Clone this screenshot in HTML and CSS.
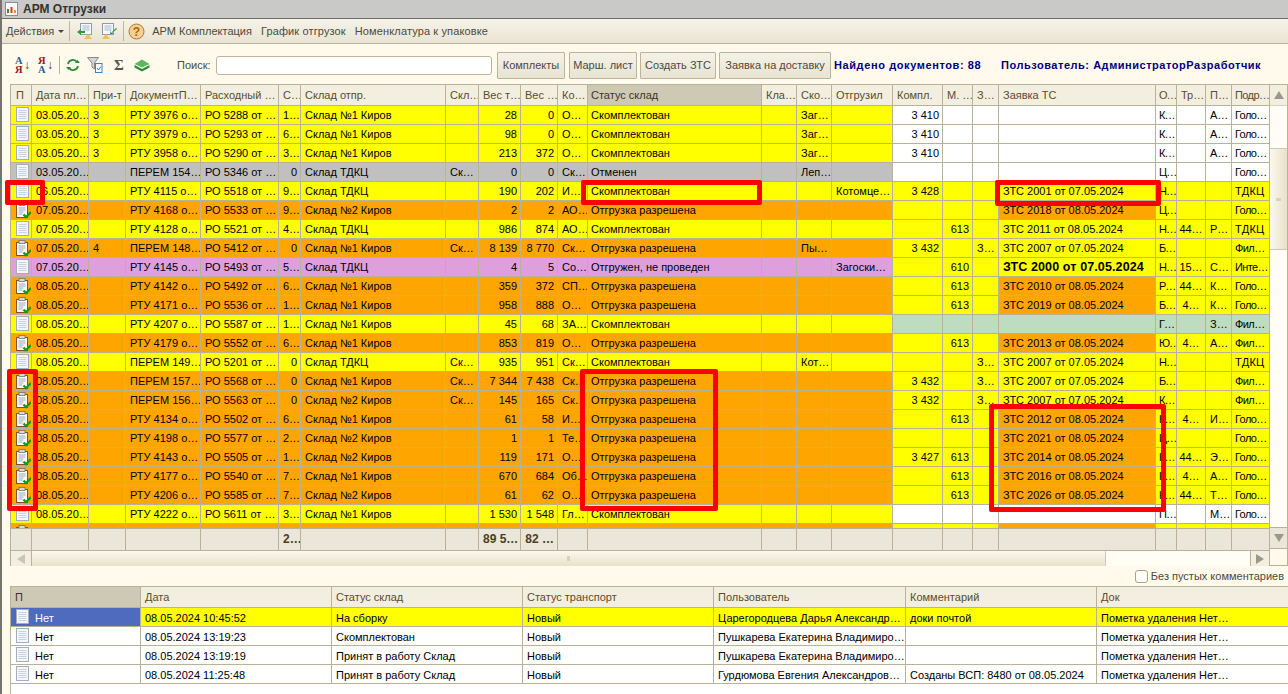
FILE: index.html
```html
<!DOCTYPE html>
<html lang="ru">
<head>
<meta charset="utf-8">
<title>АРМ Отгрузки</title>
<link rel="stylesheet" href="styles.css">
</head>
<body>
<svg class="defs" xmlns="http://www.w3.org/2000/svg">
  <symbol id="doc" viewBox="0 0 13 15"><rect x=".5" y=".5" width="12" height="14" fill="#f3f6fb" stroke="#a4aebb"/><path d="M2.500 3.500h8M2.500 5.500h8M2.500 7.500h8M2.500 9.500h8M2.500 11.500h8" stroke="#c6d1e2"/></symbol>
  <symbol id="clip" viewBox="0 0 16 17"><rect x=".5" y="2.500" width="11" height="13" fill="#fff" stroke="#8a4f1d"/><rect x="3" y=".5" width="6" height="3" fill="#d8d8d8" stroke="#77736a" stroke-width=".8"/><path d="M2.500 6h7M2.500 8h7M2.500 10h5M2.500 12h4" stroke="#9aa3b3"/><path d="M7.500 12.500l2.500 2.500 5-5" fill="none" stroke="#0f9f1f" stroke-width="2.400"/></symbol>
</svg>
<div class="win">
  <header class="title">
    <svg class="tico" width="14" height="16" viewBox="0 0 14 16"><rect x=".5" y="1.500" width="12" height="13" fill="#fbfbfb" stroke="#8d8d98"/><path d="M3 12V8" stroke="#2a9a2a" stroke-width="2"/><path d="M6.500 12V6" stroke="#d83a2a" stroke-width="2"/><path d="M10 12V9" stroke="#d9a21a" stroke-width="2"/></svg>
    <span>АРМ Отгрузки</span>
  </header>
  <nav class="menu">
    <span class="act">Действия</span><span class="caret"></span><span class="sep sp1"></span>
    <svg class="mi" width="18" height="18" viewBox="0 0 18 18"><rect x="4.500" y="1.500" width="11" height="11" fill="#f5f8fc" stroke="#8e9cb0"/><path d="M6.500 4h7M6.500 6h7M6.500 8h7" stroke="#aab8cf"/><path d="M1 10l4-3v2h4v2H5v2z" fill="#2f9a35"/><path d="M8 17l4-5 4 5z" fill="#eec25a"/></svg>
    <svg class="mi mi2" width="18" height="18" viewBox="0 0 18 18"><rect x="2.500" y="1.500" width="11" height="11" fill="#f5f8fc" stroke="#8e9cb0"/><path d="M4.500 4h7M4.500 6h7M4.500 8h7" stroke="#aab8cf"/><path d="M16 6l-5 5v-3l-1 4h4l-2-1 5-4z" fill="#2f9a35"/><path d="M2 17l4-5 4 5z" fill="#eec25a"/></svg>
    <span class="sep sp2"></span>
    <svg class="help" width="17" height="17" viewBox="0 0 17 17"><circle cx="8.500" cy="8.500" r="7.500" fill="#f8cf8c" stroke="#a9793a"/><text x="8.500" y="12.500" text-anchor="middle" class="qm">?</text></svg>
    <span class="ml1">АРМ Комплектация</span><span class="ml2">График отгрузок</span><span class="ml3">Номенклатура к упаковке</span>
  </nav>
  <div class="tools">
    <span class="sort"><span class="az"><em class="bl">А</em><em class="rd">Я</em></span><span class="arr">↓</span></span>
    <span class="sort s2"><span class="az"><em class="rd">Я</em><em class="bl">А</em></span><span class="arr">↓</span></span>
    <span class="sep sp3"></span>
    <svg class="ti t1" width="16" height="16" viewBox="0 0 16 16"><path d="M3 7a5 5 0 0 1 9-2M13 9a5 5 0 0 1-9 2" fill="none" stroke="#2d8a3a" stroke-width="1.800"/><path d="M10 6h5l-2.500-3zM6 10H1l2.500 3z" fill="#2d8a3a"/></svg>
    <svg class="ti t2" width="16" height="17" viewBox="0 0 16 17"><path d="M.5 .5h11L7.500 6v6L5 10V6z" fill="#d4d4d4" stroke="#8b8b8b"/><rect x="8.500" y="6.500" width="6.500" height="9" fill="#fff" stroke="#3a82c4"/><path d="M10 11l1.500 2 2.500-3.500" fill="none" stroke="#3a82c4"/></svg>
    <span class="sum">Σ</span>
    <svg class="ti t3" width="16" height="13" viewBox="0 0 16 13"><path d="M8 .5L15.500 5 8 8.500 .5 5z" fill="#5cb85c"/><path d="M.5 6L8 10l7.500-4v2.500L8 12.500 .5 8.500z" fill="#2d8a3a"/></svg>
    <label class="slabel" for="q">Поиск:</label>
    <input id="q" class="search" type="text">
    <button class="btn b1">Комплекты</button>
    <button class="btn b2">Марш. лист</button>
    <button class="btn b3">Создать ЗТС</button>
    <button class="btn b4">Заявка на доставку</button>
    <strong class="found">Найдено документов: 88</strong>
    <strong class="user">Пользователь: АдминистраторРазработчик</strong>
  </div>

  <section class="grid">
    <div class="gcol">
      <div class="row head">
        <span>П</span><span>Дата пл…</span><span>При-т</span><span>ДокументП…</span><span>Расходный …</span><span>С…</span><span>Склад отпр.</span><span>Скл…</span><span>Вес т…</span><span>Вес …</span><span>Ко…</span><span class="cur">Статус склад</span><span>Кла…</span><span>Ско…</span><span>Отгрузил</span><span>Компл.</span><span>М. …</span><span>З…</span><span>Заявка ТС</span><span>О…</span><span>Тр…</span><span>П…</span><span>Подр…</span>
      </div>
      <div class="rows">
        <div class="row y rw"><span><svg class="ic"><use href="#doc"/></svg></span><span>03.05.20…</span><span>3</span><span>РТУ 3976 о…</span><span>РО 5288 от …</span><span>1…</span><span>Склад №1 Киров</span><i></i><span>28</span><span>0</span><span>О…</span><span>Скомплектован</span><i></i><span>Заг…</span><i></i><span>3 410</span><i></i><i></i><i></i><span>К…</span><i></i><span>А…</span><span>Голо…</span></div>
        <div class="row y rw"><span><svg class="ic"><use href="#doc"/></svg></span><span>03.05.20…</span><span>3</span><span>РТУ 3979 о…</span><span>РО 5293 от …</span><span>6…</span><span>Склад №1 Киров</span><i></i><span>98</span><span>0</span><span>О…</span><span>Скомплектован</span><i></i><span>Заг…</span><i></i><span>3 410</span><i></i><i></i><i></i><span>К…</span><i></i><span>А…</span><span>Голо…</span></div>
        <div class="row y rw"><span><svg class="ic"><use href="#doc"/></svg></span><span>03.05.20…</span><span>3</span><span>РТУ 3958 о…</span><span>РО 5290 от …</span><span>3…</span><span>Склад №1 Киров</span><i></i><span>213</span><span>372</span><span>О…</span><span>Скомплектован</span><i></i><span>Заг…</span><i></i><span>3 410</span><i></i><i></i><i></i><span>К…</span><i></i><span>А…</span><span>Голо…</span></div>
        <div class="row g rw"><span><svg class="ic"><use href="#doc"/></svg></span><span>03.05.20…</span><i></i><span>ПЕРЕМ 154…</span><span>РО 5346 от …</span><span>0</span><span>Склад ТДКЦ</span><span>Ск…</span><span>0</span><span>0</span><span>Ск…</span><span>Отменен</span><i></i><span>Леп…</span><i></i><i></i><i></i><i></i><i></i><span>Ц…</span><i></i><i></i><span>Голо…</span></div>
        <div class="row y ry"><span><svg class="ic"><use href="#doc"/></svg></span><span>06.05.20…</span><i></i><span>РТУ 4115 о…</span><span>РО 5518 от …</span><span>9…</span><span>Склад ТДКЦ</span><i></i><span>190</span><span>202</span><span>И…</span><span>Скомплектован</span><i></i><i></i><span>Котомце…</span><span>3 428</span><i></i><i></i><span>ЗТС 2001 от 07.05.2024</span><span>Н…</span><i></i><i></i><span class="wd">ТДКЦ</span></div>
        <div class="row o ry"><span><svg class="icc"><use href="#clip"/></svg></span><span>07.05.20…</span><i></i><span>РТУ 4168 о…</span><span>РО 5533 от …</span><span>9…</span><span>Склад №2 Киров</span><i></i><span>2</span><span>2</span><span>АО…</span><span>Отгрузка разрешена</span><i></i><i></i><i></i><i></i><i></i><i></i><span class="zo">ЗТС 2018 от 08.05.2024</span><span>Ц…</span><i></i><i></i><span>Голо…</span></div>
        <div class="row y ry"><span><svg class="ic"><use href="#doc"/></svg></span><span>07.05.20…</span><i></i><span>РТУ 4128 о…</span><span>РО 5521 от …</span><span>4…</span><span>Склад ТДКЦ</span><i></i><span>986</span><span>874</span><span>АО…</span><span>Скомплектован</span><i></i><i></i><i></i><i></i><span>613</span><i></i><span>ЗТС 2011 от 08.05.2024</span><span>Н…</span><span>44…</span><span>Р…</span><span class="wd">ТДКЦ</span></div>
        <div class="row o ry"><span><svg class="icc"><use href="#clip"/></svg></span><span>07.05.20…</span><span>4</span><span>ПЕРЕМ 148…</span><span>РО 5412 от …</span><span>0</span><span>Склад №1 Киров</span><span>Ск…</span><span>8 139</span><span>8 770</span><span>Ск…</span><span>Отгрузка разрешена</span><i></i><span>Пы…</span><i></i><span>3 432</span><i></i><span>З…</span><span>ЗТС 2007 от 07.05.2024</span><span>Б…</span><i></i><i></i><span>Фил…</span></div>
        <div class="row p ry"><span><svg class="ic"><use href="#doc"/></svg></span><span>07.05.20…</span><i></i><span>РТУ 4145 о…</span><span>РО 5493 от …</span><span>5…</span><span>Склад ТДКЦ</span><i></i><span>4</span><span>5</span><span>Со…</span><span>Отгружен, не проведен</span><i></i><i></i><span>Загоски…</span><i></i><span>610</span><i></i><span class="zb">ЗТС 2000 от 07.05.2024</span><span>Н…</span><span>15…</span><span>С…</span><span>Инте…</span></div>
        <div class="row o ry"><span><svg class="icc"><use href="#clip"/></svg></span><span>08.05.20…</span><i></i><span>РТУ 4142 о…</span><span>РО 5492 от …</span><span>6…</span><span>Склад №1 Киров</span><i></i><span>359</span><span>372</span><span>СП…</span><span>Отгрузка разрешена</span><i></i><i></i><i></i><i></i><span>613</span><i></i><span class="zo">ЗТС 2010 от 08.05.2024</span><span>Р…</span><span>44…</span><span>К…</span><span>Голо…</span></div>
        <div class="row o ry"><span><svg class="icc"><use href="#clip"/></svg></span><span>08.05.20…</span><i></i><span>РТУ 4171 о…</span><span>РО 5536 от …</span><span>1…</span><span>Склад №1 Киров</span><i></i><span>958</span><span>888</span><span>О…</span><span>Отгрузка разрешена</span><i></i><i></i><i></i><i></i><span>613</span><i></i><span class="zo">ЗТС 2019 от 08.05.2024</span><span>Б…</span><span>4…</span><span>К…</span><span>Голо…</span></div>
        <div class="row y rg"><span><svg class="ic"><use href="#doc"/></svg></span><span>08.05.20…</span><i></i><span>РТУ 4207 о…</span><span>РО 5587 от …</span><span>1…</span><span>Склад №1 Киров</span><i></i><span>45</span><span>68</span><span>ЗА…</span><span>Скомплектован</span><i></i><i></i><i></i><i></i><i></i><i></i><i></i><span>Г…</span><i></i><span>З…</span><span>Фил…</span></div>
        <div class="row o ry"><span><svg class="icc"><use href="#clip"/></svg></span><span>08.05.20…</span><i></i><span>РТУ 4179 о…</span><span>РО 5552 от …</span><span>6…</span><span>Склад №1 Киров</span><i></i><span>853</span><span>819</span><span>О…</span><span>Отгрузка разрешена</span><i></i><i></i><i></i><i></i><span>613</span><i></i><span class="zo">ЗТС 2013 от 08.05.2024</span><span>Ю…</span><span>4…</span><span>А…</span><span>Фил…</span></div>
        <div class="row y ry"><span><svg class="ic"><use href="#doc"/></svg></span><span>08.05.20…</span><i></i><span>ПЕРЕМ 149…</span><span>РО 5201 от …</span><span>0</span><span>Склад ТДКЦ</span><span>Ск…</span><span>935</span><span>951</span><span>Ск…</span><span>Скомплектован</span><i></i><span>Кот…</span><i></i><i></i><i></i><span>З…</span><span>ЗТС 2007 от 07.05.2024</span><span>Н…</span><i></i><i></i><span class="wd">ТДКЦ</span></div>
        <div class="row o ry"><span><svg class="icc"><use href="#clip"/></svg></span><span>08.05.20…</span><i></i><span>ПЕРЕМ 157…</span><span>РО 5568 от …</span><span>0</span><span>Склад №1 Киров</span><span>Ск…</span><span>7 344</span><span>7 438</span><span>Ск…</span><span>Отгрузка разрешена</span><i></i><i></i><i></i><span>3 432</span><i></i><span>З…</span><span>ЗТС 2007 от 07.05.2024</span><span>Б…</span><i></i><i></i><span>Фил…</span></div>
        <div class="row o ry"><span><svg class="icc"><use href="#clip"/></svg></span><span>08.05.20…</span><i></i><span>ПЕРЕМ 156…</span><span>РО 5563 от …</span><span>0</span><span>Склад №2 Киров</span><span>Ск…</span><span>145</span><span>165</span><span>Ск…</span><span>Отгрузка разрешена</span><i></i><i></i><i></i><span>3 432</span><i></i><span>З…</span><span>ЗТС 2007 от 07.05.2024</span><span>К…</span><i></i><i></i><span>Фил…</span></div>
        <div class="row o ry"><span><svg class="icc"><use href="#clip"/></svg></span><span>08.05.20…</span><i></i><span>РТУ 4134 о…</span><span>РО 5502 от …</span><span>6…</span><span>Склад №1 Киров</span><i></i><span>61</span><span>58</span><span>И…</span><span>Отгрузка разрешена</span><i></i><i></i><i></i><i></i><span>613</span><i></i><span class="zo">ЗТС 2012 от 08.05.2024</span><span>К…</span><span>4…</span><span>И…</span><span>Голо…</span></div>
        <div class="row o ry"><span><svg class="icc"><use href="#clip"/></svg></span><span>08.05.20…</span><i></i><span>РТУ 4198 о…</span><span>РО 5577 от …</span><span>2…</span><span>Склад №2 Киров</span><i></i><span>1</span><span>1</span><span>Те…</span><span>Отгрузка разрешена</span><i></i><i></i><i></i><i></i><i></i><i></i><span class="zo">ЗТС 2021 от 08.05.2024</span><span>Ц…</span><i></i><i></i><span>Голо…</span></div>
        <div class="row o ry"><span><svg class="icc"><use href="#clip"/></svg></span><span>08.05.20…</span><i></i><span>РТУ 4143 о…</span><span>РО 5505 от …</span><span>1…</span><span>Склад №2 Киров</span><i></i><span>119</span><span>171</span><span>О…</span><span>Отгрузка разрешена</span><i></i><i></i><i></i><span>3 427</span><span>613</span><i></i><span class="zo">ЗТС 2014 от 08.05.2024</span><span>К…</span><span>44…</span><span>Э…</span><span>Голо…</span></div>
        <div class="row o ry"><span><svg class="icc"><use href="#clip"/></svg></span><span>08.05.20…</span><i></i><span>РТУ 4177 о…</span><span>РО 5540 от …</span><span>7…</span><span>Склад №1 Киров</span><i></i><span>670</span><span>684</span><span>Об…</span><span>Отгрузка разрешена</span><i></i><i></i><i></i><i></i><span>613</span><i></i><span class="zo">ЗТС 2016 от 08.05.2024</span><span>К…</span><span>4…</span><span>А…</span><span>Голо…</span></div>
        <div class="row o ry"><span><svg class="icc"><use href="#clip"/></svg></span><span>08.05.20…</span><i></i><span>РТУ 4206 о…</span><span>РО 5585 от …</span><span>7…</span><span>Склад №2 Киров</span><i></i><span>61</span><span>62</span><span>О…</span><span>Отгрузка разрешена</span><i></i><i></i><i></i><i></i><span>613</span><i></i><span class="zo">ЗТС 2026 от 08.05.2024</span><span>К…</span><span>44…</span><span>Т…</span><span>Голо…</span></div>
        <div class="row y rw"><span><svg class="ic"><use href="#doc"/></svg></span><span>08.05.20…</span><i></i><span>РТУ 4222 о…</span><span>РО 5611 от …</span><span>3…</span><span>Склад №1 Киров</span><i></i><span>1 530</span><span>1 548</span><span>Гл…</span><span>Скомплектован</span><i></i><i></i><i></i><i></i><i></i><i></i><i></i><span>П…</span><i></i><span>М…</span><span>Голо…</span></div>
        <div class="row o ry"><span><svg class="icc"><use href="#clip"/></svg></span><i></i><i></i><i></i><i></i><i></i><i></i><i></i><i></i><i></i><i></i><i></i><i></i><i></i><i></i><i></i><i></i><i></i><span class="zo"></span><i></i><i></i><i></i><i></i></div>
      </div>
      <div class="row foot">
        <i></i><i></i><i></i><i></i><i></i><span>2…</span><i></i><i></i><span>89 5…</span><span>82 …</span><i></i><i></i><i></i><i></i><i></i><i></i><i></i><i></i><i></i><i></i><i></i><i></i><i></i>
      </div>
      <div class="hs">
        <span class="hbtn"><span class="tri tl"></span></span>
        <span class="hthumb"><span class="vgrip"></span></span>
        <span class="htrack"></span>
        <span class="hbtn hr"><span class="tri tr"></span></span>
      </div>
    </div>
    <aside class="vs">
      <span class="vbtn"><span class="tri tu"></span></span>
      <span class="vtop"></span>
      <span class="vthumb"><span class="hgrip"></span></span>
      <span class="vtrack"></span>
      <span class="vbtn vd"><span class="tri td"></span></span>
      <span class="corner"></span>
    </aside>
  </section>

  <div class="chkrow"><span class="chk"></span><span>Без пустых комментариев</span></div>

  <section class="lower">
    <div class="lrow lhead"><span class="cur">П</span><span>Дата</span><span>Статус склад</span><span>Статус транспорт</span><span>Пользователь</span><span>Комментарий</span><span>Док</span></div>
    <div class="lrow sel"><span class="pic"><svg class="ic"><use href="#doc"/></svg>Нет</span><span>08.05.2024 10:45:52</span><span>На сборку</span><span>Новый</span><span>Царегородцева Дарья Александр…</span><span>доки почтой</span><span>Пометка удаления Нет…</span></div>
    <div class="lrow"><span class="pic"><svg class="ic"><use href="#doc"/></svg>Нет</span><span>08.05.2024 13:19:23</span><span>Скомплектован</span><span>Новый</span><span>Пушкарева Екатерина Владимиро…</span><i></i><span>Пометка удаления Нет…</span></div>
    <div class="lrow"><span class="pic"><svg class="ic"><use href="#doc"/></svg>Нет</span><span>08.05.2024 13:19:19</span><span>Принят в работу Склад</span><span>Новый</span><span>Пушкарева Екатерина Владимиро…</span><i></i><span>Пометка удаления Нет…</span></div>
    <div class="lrow"><span class="pic"><svg class="ic"><use href="#doc"/></svg>Нет</span><span>08.05.2024 11:25:48</span><span>Принят в работу Склад</span><span>Новый</span><span>Гурдюмова Евгения Александров…</span><span>Созданы ВСП: 8480 от 08.05.2024</span><span>Пометка удаления Нет…</span></div>
  </section>
</div>
<div class="mark m1"></div>
<div class="mark m2"></div>
<div class="mark m3"></div>
<div class="mark m4"></div>
<div class="mark m5"></div>
<div class="mark m6"></div>
</body>
</html>
```
FILE: styles.css
```css
* { box-sizing: border-box; }
html, body { margin: 0; padding: 0; }
body {
  width: 1288px; height: 694px; overflow: hidden; position: relative;
  font: 11px/18px "Liberation Sans", Arial, sans-serif; color: #000; background: #fffaeb;
}
.defs { display: none; }
.win { height: 694px; border-left: 2px solid #77746c; display: flex; flex-direction: column; }

.title {
  height: 19px; flex: none; display: flex; align-items: center; gap: 4px; padding-left: 3px;
  background: #c9c9c7; border-bottom: 1px solid #6d6d68; font-weight: bold; color: #333; font-size: 12px;
}
.menu {
  height: 25px; flex: none; display: flex; align-items: center; padding-left: 4px;
  background: linear-gradient(#f6f3e8, #e9e4d4); border-bottom: 1px solid #b9b296; color: #4d4a3c;
}
.caret { width: 0; height: 0; margin-left: 4px; border: 3px solid transparent; border-top: 3px solid #444; border-bottom: 0; }
.sep { width: 1px; height: 20px; background: #bdb69f; flex: none; }
.sp1 { margin-left: 5px; }
.mi { margin-left: 6px; }
.mi2 { margin-left: 6px; }
.sp2 { margin-left: 5px; }
.help { margin-left: 4px; }
.qm { font: bold 12px "Liberation Sans", sans-serif; fill: #a8641a; }
.ml1 { margin-left: 7px; }
.ml2 { margin-left: 9px; letter-spacing: .13px; }
.ml3 { margin-left: 9px; letter-spacing: .13px; }

.tools { height: 40px; flex: none; display: flex; align-items: center; padding: 2px 0 0 13px; color: #4d4a3c; }
.sort { display: flex; width: 16px; height: 18px; }
.s2 { margin-left: 7px; }
.az { display: flex; flex-direction: column; font: bold 10.5px/9px "Liberation Serif", serif; width: 9px; }
.az em { font-style: normal; }
.bl { color: #1f5e9e; }
.rd { color: #a3161c; }
.arr { font: bold 12px/18px "Liberation Sans", sans-serif; color: #333; }
.sp3 { margin-left: 5px; height: 18px; }
.t1 { margin-left: 5px; }
.t2 { margin-left: 6px; }
.sum { margin-left: 11px; width: 12px; font: bold 15px/18px "Liberation Serif", serif; color: #555; }
.t3 { margin-left: 8px; }
.slabel { margin-left: 27px; width: 39px; }
.search { width: 276px; height: 19px; border: 1px solid #bdb69f; border-radius: 3px; background: #fff; padding: 0; }
.btn {
  height: 27px; padding: 0; margin-left: 3px; border: 1px solid #bbb499; border-radius: 1px;
  background: linear-gradient(#f5f2e7, #e8e3d2); color: #4d4a3c; font: 11px "Liberation Sans", sans-serif;
}
.b1 { width: 68px; margin-left: 5px; }
.b2 { width: 68px; margin-left: 4px; }
.b3 { width: 76px; }
.b4 { width: 112px; }
.found, .user { color: #00007f; white-space: nowrap; }
.found { margin-left: 3px; width: 167px; letter-spacing: .6px; }
.user { letter-spacing: .53px; }

.grid { height: 482px; flex: none; margin-left: 8px; border: 1px solid #b9b296; display: flex; background: #fffaeb; }
.gcol { width: 1259px; flex: none; display: flex; flex-direction: column; }
.row {
  display: grid; height: 19px;
  grid-template-columns: 21px 57px 37px 75px 78px 22px 145px 33px 42px 37px 30px 174px 35px 35px 61px 50px 30px 26px 157px 21px 29px 26px 38px;
}
.row > * {
  display: block; min-width: 0; overflow: hidden; white-space: nowrap; font-style: normal;
  padding: 1px 0 0 4px; border-right: 1px solid #b8b297; border-bottom: 1px solid #b8b297; line-height: 17px;
}
.row > :nth-child(6), .row > :nth-child(9), .row > :nth-child(10), .row > :nth-child(16), .row > :nth-child(17) { text-align: right; padding-right: 3px; }
.row > :nth-child(21) { text-align: center; padding-left: 0; }
.row > :nth-child(12) { padding-left: 3px; }
.row > :nth-child(20) { padding-left: 3px; letter-spacing: -1px; }
.row > :nth-child(23) { padding-left: 3px; letter-spacing: -.6px; }
.row > .wd { letter-spacing: .3px; }
.row > :first-child { padding: 0 0 0 5px; }
.head { height: 21px; background: #f3efe0; color: #5a4c2c; }
.head > * { line-height: 20px; padding-top: 0; text-align: left !important; }
.head > :nth-child(21) { padding-left: 4px; }
.head > .cur { background: #cdc9b5; color: #3d3520; }
.rows { height: 422px; overflow: hidden; flex: none; }
.y { background: #ff0; }
.o { background: #ffa500; }
.g { background: #c0c0c0; }
.p { background: #dda0dd; }
.row > .zo { background: #ffa500; }
.zb { font-weight: bold; font-size: 12.5px; letter-spacing: .12px; }
.rw > :nth-child(n+16) { background: #fff; }
.ry > :nth-child(n+16) { background: #ff0; }
.ry > :nth-child(n+16).zo { background: #ffa500; }
.rg > :nth-child(n+16) { background: #bedcc0; }
.ic { width: 13px; height: 15px; display: block; margin-top: 1px; }
.icc { width: 16px; height: 17px; display: block; margin-top: 1px; }
.foot { height: 22px; flex: none; background: #ebe6da; border-top: 1px solid #b8b297; font-weight: bold; color: #4d4020; font-size: 12px; }
.foot > * { line-height: 20px; padding-top: 0; border-bottom: 0; }
.hs { height: 16px; flex: none; display: flex; border-top: 1px solid #b8b297; border-bottom: 0; background: #fffaeb; }
.hbtn { width: 21px; flex: none; display: flex; align-items: center; justify-content: center; background: #f3efe0; border-right: 1px solid #b8b297; }
.hr { width: 20px; border-left: 1px solid #b8b297; border-right: 1px solid #b8b297; }
.hthumb { width: 1074px; flex: none; display: flex; align-items: center; justify-content: center; background: linear-gradient(#fbf8ee, #e9e1c8); border-right: 1px solid #cfc9b3; }
.htrack { flex: 1; background: #fffdf5; }
.vgrip { width: 3px; height: 5px; background: #d8d2bc; }
.tri { width: 0; height: 0; border: 5px solid transparent; }
.tl { border-right: 8px solid #c8c5b8; border-left: 0; }
.tr { border-left: 8px solid #9a988c; border-right: 0; }
.tu { border-bottom: 8px solid #9a988c; border-top: 0; }
.td { border-top: 8px solid #9a988c; border-bottom: 0; }
.vs { flex: 1; display: flex; flex-direction: column; min-width: 0; }
.vbtn { height: 21px; flex: none; display: flex; align-items: center; justify-content: center; background: #f3efe0; border-bottom: 1px solid #d8d2bc; }
.vd { height: 22px; border-top: 1px solid #b8b297; border-bottom: 1px solid #b8b297; background: #ebe6da; }
.vtop { height: 42px; flex: none; background: #fffdf5; }
.vthumb { height: 102px; flex: none; display: flex; align-items: center; justify-content: center; background: linear-gradient(90deg, #fbf8ee, #e9e1c8); border-top: 1px solid #cfc9b3; border-bottom: 1px solid #cfc9b3; }
.vtrack { flex: 1; background: #fffdf5; }
.hgrip { width: 5px; height: 3px; background: #d8d2bc; }
.corner { height: 16px; flex: none; background: #fffaeb; }

.chkrow { height: 20px; flex: none; display: flex; align-items: center; justify-content: flex-end; gap: 3px; padding-right: 4px; color: #4d4a3c; }
.chk { width: 13px; height: 13px; border: 1px solid #a8a38e; border-radius: 3px; background: #fffdf5; }
.lower { flex: 1; margin-left: 8px; background: #fff; border-top: 1px solid #b8b297; border-left: 1px solid #b8b297; }
.lrow { display: grid; height: 19px; grid-template-columns: 130px 191px 191px 191px 192px 191px 1fr; }
.lrow > * {
  display: block; min-width: 0; overflow: hidden; white-space: nowrap; font-style: normal;
  padding: 1px 0 0 4px; border-right: 1px solid #b8b297; border-bottom: 1px solid #b8b297; line-height: 18px;
}
.lrow > :last-child { border-right: 0; }
.lhead { height: 21px; background: #f3efe0; color: #5a4c2c; }
.lhead > * { line-height: 20px; padding-top: 0; }
.lhead > .cur { background: #cdc9b5; color: #3d3520; }
.lrow > .pic { display: flex; align-items: center; gap: 6px; padding-left: 5px; }
.pic .ic { margin-top: -2px; }
.sel { background: #ff0; }
.sel > .pic { background: #4f6bbd; color: #fff; }

.mark { position: absolute; border: 5px solid #f00; border-radius: 2px; }
.m1 { left: 5px; top: 180px; width: 40px; height: 25px; }
.m2 { left: 581px; top: 180px; width: 181px; height: 25px; }
.m3 { left: 995px; top: 180px; width: 166px; height: 26px; }
.m4 { left: 7px; top: 369px; width: 31px; height: 142px; }
.m5 { left: 580px; top: 369px; width: 138px; height: 142px; }
.m6 { left: 989px; top: 404px; width: 177px; height: 108px; }
```
